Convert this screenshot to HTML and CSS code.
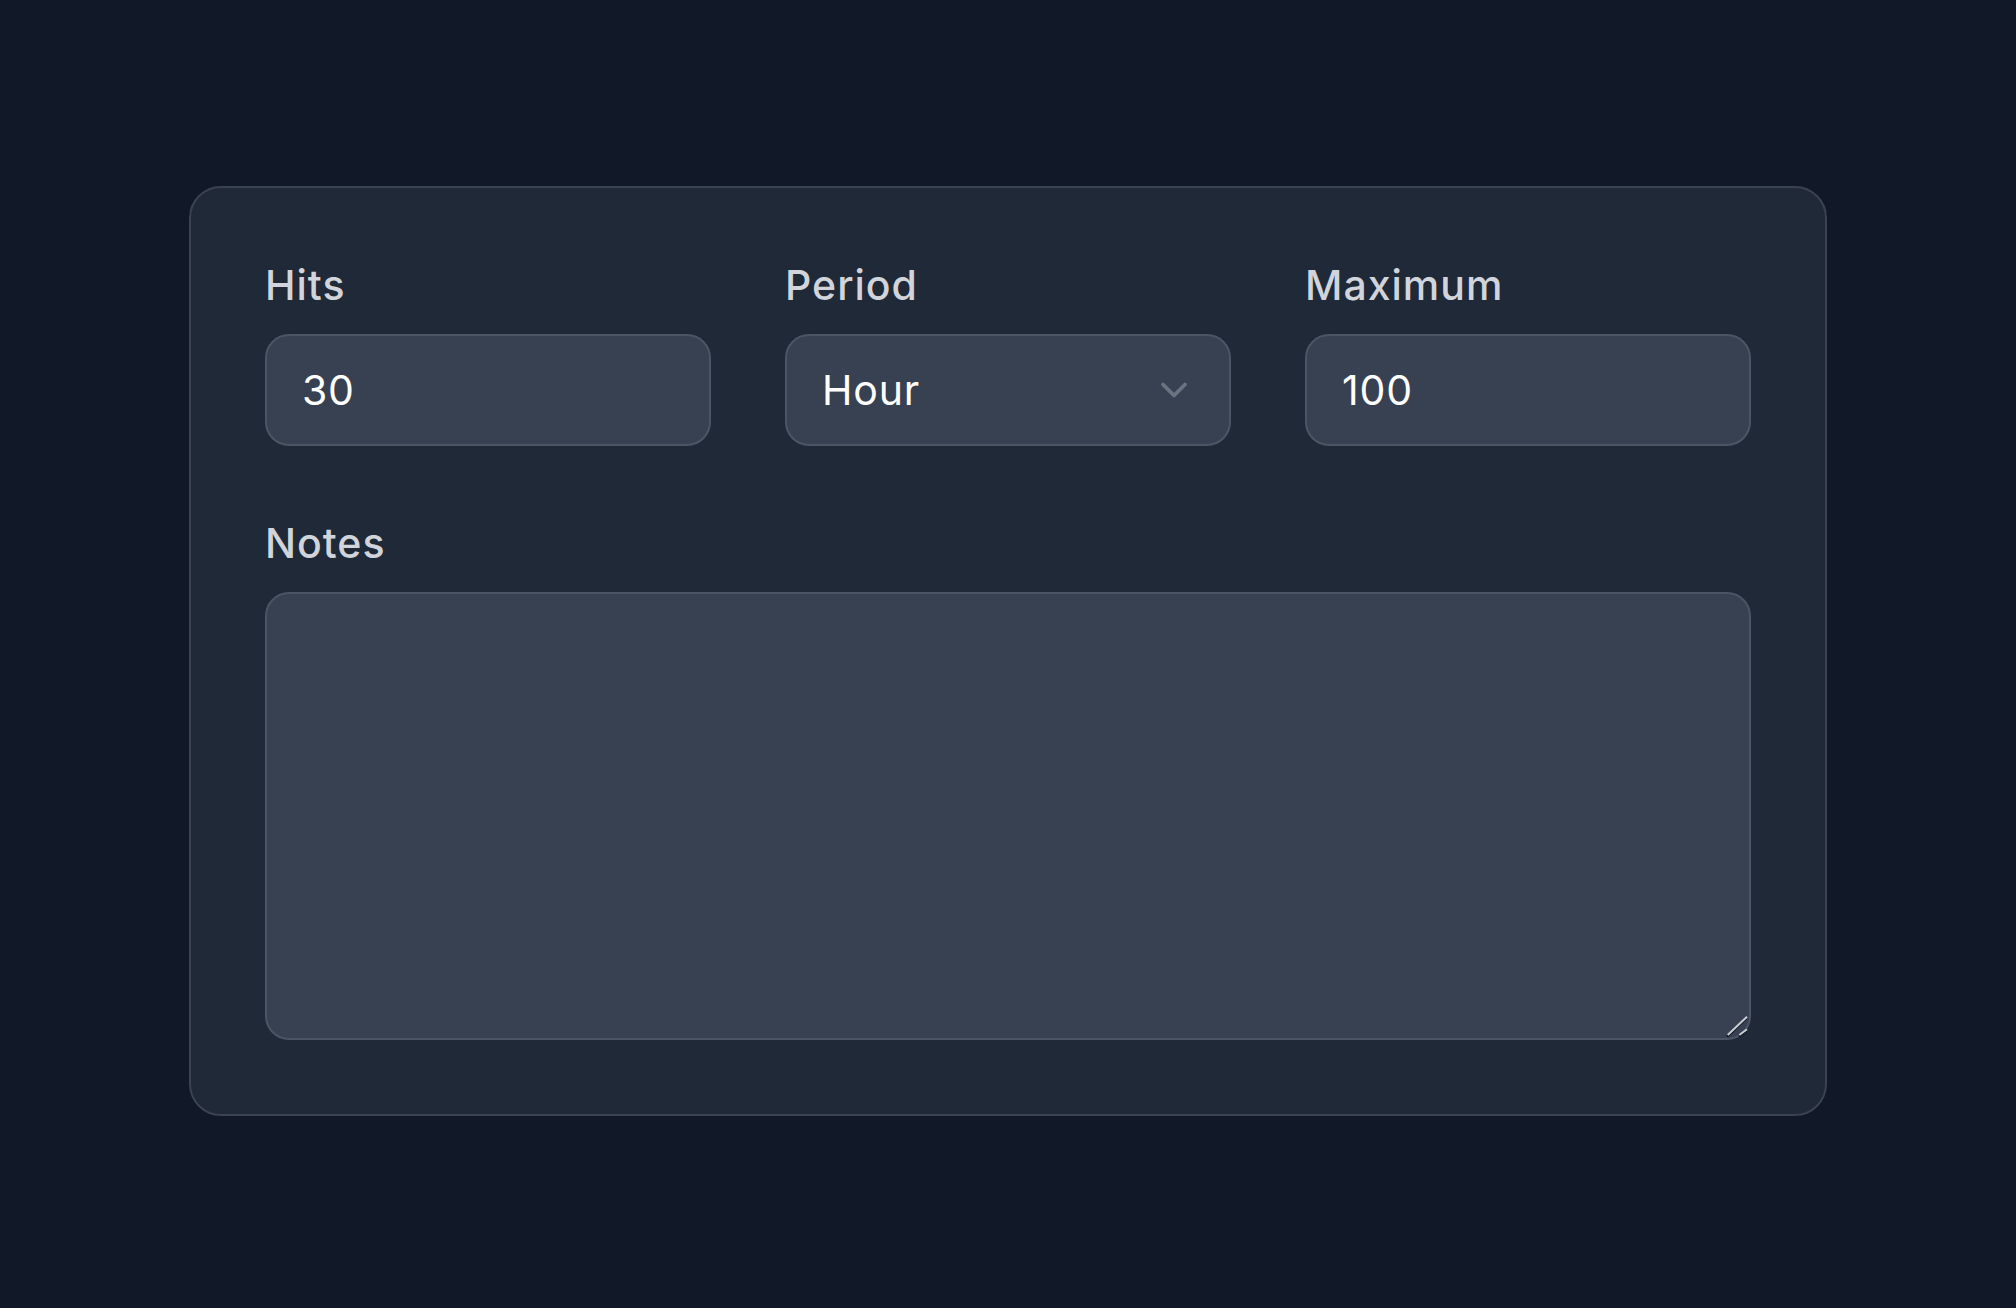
FILE: index.html
```html
<!DOCTYPE html>
<html lang="en">
<head>
<meta charset="utf-8">
<title>Rate limit</title>
<link rel="stylesheet" href="styles.css">
</head>
<body>
  <form class="card">
    <div class="row">
      <div class="field">
        <label class="label" for="hits">Hits</label>
        <input class="control" id="hits" type="text" inputmode="numeric" value="30">
      </div>
      <div class="field">
        <label class="label" for="period">Period</label>
        <div class="select-wrap">
          <select class="control select" id="period">
            <option>Minute</option>
            <option selected>Hour</option>
            <option>Day</option>
          </select>
          <svg class="chevron" viewBox="0 0 28 20" aria-hidden="true"><path d="M3 4.5L14 15.5 25 4.5" fill="none" stroke="currentColor" stroke-width="3.8" stroke-linecap="round" stroke-linejoin="round"/></svg>
        </div>
      </div>
      <div class="field">
        <label class="label" for="max">Maximum</label>
        <input class="control" id="max" type="text" inputmode="numeric" value="100">
      </div>
    </div>
    <div class="field">
      <label class="label" for="notes">Notes</label>
      <div class="notes-wrap">
        <textarea class="control notes" id="notes"></textarea>
        <svg class="resizer" viewBox="0 0 30 30" aria-hidden="true">
          <g stroke-linecap="butt" fill="none">
            <path d="M6.2 26.6L25.4 8.2M18 26.6L25.4 20.6" stroke="#111827" stroke-width="2.4"/>
            <path d="M6.7 25L26 6.7M18.3 25L26 19.3" stroke="#c9cdd3" stroke-width="2"/>
          </g>
        </svg>
      </div>
    </div>
  </form>
</body>
</html>
```

FILE: styles.css
```css
* { box-sizing: border-box; }

html, body {
  margin: 0;
  background: #111827;
}

body {
  min-height: 1308px;
  padding-top: 186px;
  font-family: Inter, "Noto Sans", sans-serif;
}

.card {
  width: 1638px;
  margin: 0 auto;
  padding: 74px;
  background: #1f2937;
  border: 2px solid #3a4351;
  border-radius: 32px;
  display: flex;
  flex-direction: column;
  gap: 74px;
}

.row {
  display: grid;
  grid-template-columns: repeat(3, 1fr);
  gap: 74px;
}

.field {
  display: flex;
  flex-direction: column;
}

.label {
  display: block;
  height: 47px;
  margin-bottom: 25px;
  font-size: 41px;
  line-height: 47px;
  font-weight: 500;
  letter-spacing: 1px;
  color: #d1d5db;
}

.control {
  display: block;
  width: 100%;
  height: 112px;
  margin: 0;
  padding: 0 35px;
  background: #374151;
  border: 2px solid #4b5563;
  border-radius: 24px;
  color: #ffffff;
  font-family: Inter, "Noto Sans", sans-serif;
  font-size: 41px;
  font-weight: 400;
  letter-spacing: 0.8px;
  outline: none;
}

.select-wrap {
  position: relative;
}

.select {
  appearance: none;
  -webkit-appearance: none;
  padding-right: 90px;
}

.chevron {
  position: absolute;
  right: 43px;
  top: 46px;
  width: 28px;
  height: 20px;
  color: #6b7280;
  pointer-events: none;
}

.notes-wrap {
  position: relative;
}

.notes {
  height: 448px;
  padding: 24px 35px;
  resize: none;
}

.resizer {
  position: absolute;
  right: 0;
  bottom: 0;
  width: 30px;
  height: 30px;
  pointer-events: none;
}
```
